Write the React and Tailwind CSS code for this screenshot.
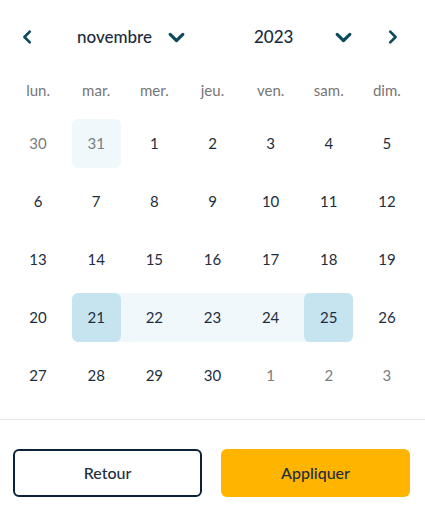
import React from 'react';

const weekDays = ['lun.', 'mar.', 'mer.', 'jeu.', 'ven.', 'sam.', 'dim.'];

// each day: [label, outside month]
const weeks = [
  [['30', true], ['31', true], ['1'], ['2'], ['3'], ['4'], ['5']],
  [['6'], ['7'], ['8'], ['9'], ['10'], ['11'], ['12']],
  [['13'], ['14'], ['15'], ['16'], ['17'], ['18'], ['19']],
  [['20'], ['21'], ['22'], ['23'], ['24'], ['25'], ['26']],
  [['27'], ['28'], ['29'], ['30'], ['1', true], ['2', true], ['3', true]],
];

const Chevron = ({ dir = 'down', className = '' }) => {
  const points = {
    down: '3,6 9,12 15,6',
    left: '11,3 5,9 11,15',
    right: '7,3 13,9 7,15',
  }[dir];
  return (
    <svg viewBox="0 0 18 18" className={className} fill="none">
      <polyline points={points} stroke="#0d4a5c" strokeWidth="3" strokeLinecap="round" strokeLinejoin="round" />
    </svg>
  );
};

const DayCell = ({ label, outside, week, idx }) => {
  const isStart = week === 3 && idx === 1;
  const isEnd = week === 3 && idx === 5;
  const inRange = week === 3 && idx > 1 && idx < 5;
  const isToday = week === 0 && idx === 1;

  let strip = '';
  if (inRange) strip = 'bg-[#f0f8fc]';
  if (isStart) strip = 'bg-[linear-gradient(to_right,transparent_50%,#f0f8fc_50%)]';
  if (isEnd) strip = 'bg-[linear-gradient(to_left,transparent_50%,#f0f8fc_50%)]';

  let box = '';
  if (isStart || isEnd) box = 'bg-[#c6e4ef]';
  if (isToday) box = 'bg-[#f0f8fc]';

  return (
    <div className="h-[58px] flex items-center">
      <div className={`h-[49px] w-full flex justify-center ${strip}`}>
        <div
          className={`w-[49px] h-[49px] rounded-[6px] flex items-center justify-center text-[15px] ${box} ${
            outside ? 'text-[#7a7d80]' : 'text-[#1d2e40]'
          }`}
        >
          {label}
        </div>
      </div>
    </div>
  );
};

export default function App() {
  return (
    <div className="w-[425px] h-[511px] bg-white font-['Lato','Liberation_Sans',sans-serif]">
      <div className="h-[74px] flex items-center">
        <div className="ml-[20px] w-[16px] h-[16px]">
          <Chevron dir="left" className="w-[16px] h-[16px]" />
        </div>
        <div className="ml-[41px] w-[109px] flex items-center justify-between">
          <span className="text-[17px] font-medium text-[#1b2b3d]">novembre</span>
          <Chevron dir="down" className="w-[19px] h-[19px]" />
        </div>
        <div className="ml-[68px] w-[99px] flex items-center justify-between">
          <span className="text-[17px] font-medium text-[#1b2b3d]">2023</span>
          <Chevron dir="down" className="w-[19px] h-[19px]" />
        </div>
        <div className="ml-[31px] w-[16px] h-[16px]">
          <Chevron dir="right" className="w-[16px] h-[16px]" />
        </div>
      </div>

      <div className="px-[9px] grid grid-cols-7 h-[32px] items-center">
        {weekDays.map((d) => (
          <div key={d} className="text-center text-[15px] text-[#767676]">
            {d}
          </div>
        ))}
      </div>

      <div className="mt-[8px] px-[9px] grid grid-cols-7">
        {weeks.map((week, w) =>
          week.map(([label, outside], i) => (
            <DayCell key={`${w}-${i}`} label={label} outside={outside} week={w} idx={i} />
          ))
        )}
      </div>

      <div className="mt-[15px] border-t border-[#e8e8e8]" />

      <div className="mt-[29px] px-[13px] flex gap-[19px]">
        <button className="w-[189px] h-[48px] rounded-[6px] border-2 border-[#0c2238] text-[#1d2e40] text-[16px] font-medium">
          Retour
        </button>
        <button className="w-[189px] h-[48px] rounded-[6px] bg-[#ffb400] text-[#1d2e40] text-[16px] font-medium">
          Appliquer
        </button>
      </div>
    </div>
  );
}
